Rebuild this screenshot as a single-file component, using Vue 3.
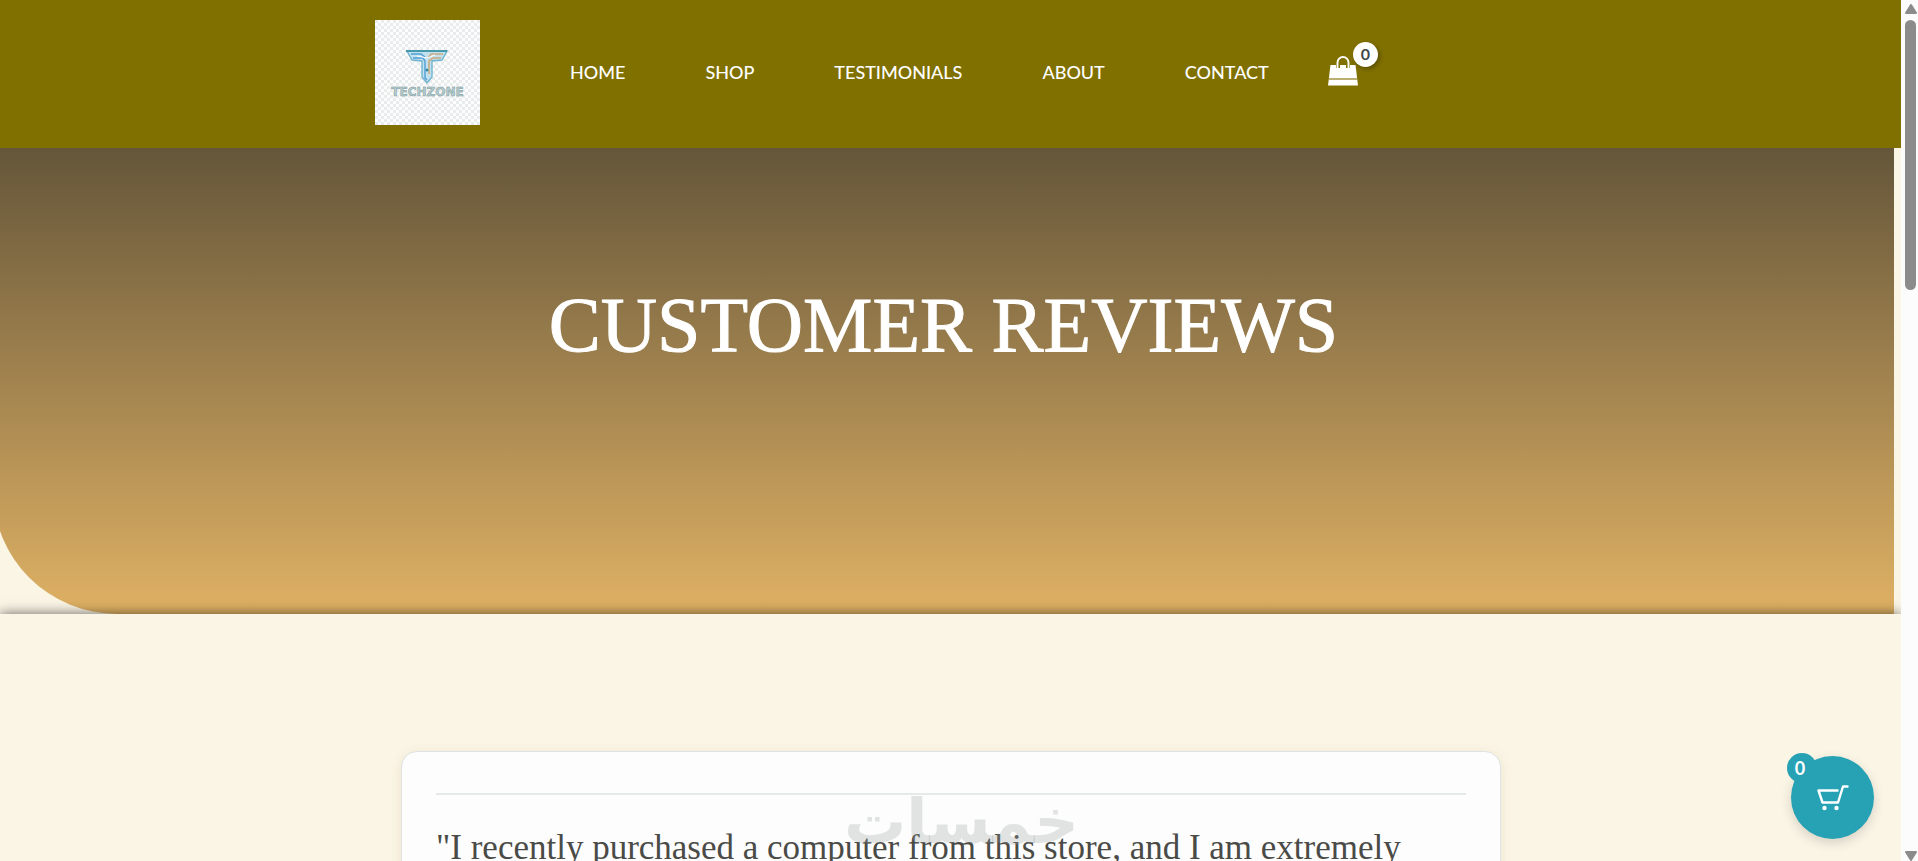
<script setup>
const links = ['Home', 'Shop', 'Testimonials', 'About', 'Contact']
const cartCount = 0
const review = '"I recently purchased a computer from this store, and I am extremely'
</script>

<template>
  <div class="window">
    <div class="page">
      <header class="site-header">
        <a class="logo" href="#" aria-label="TechZone">
          <svg viewBox="0 0 105 105" width="105" height="105" aria-hidden="true">
            <defs>
              <pattern id="checks" width="6" height="6" patternUnits="userSpaceOnUse">
                <rect width="6" height="6" fill="#fdfdfd" />
                <path d="M0 0h3v3H0zM3 3h3v3H3z" fill="#e9ecec" />
              </pattern>
            </defs>
            <rect width="105" height="105" fill="url(#checks)" />
            <path d="M32 31h40l-5 9-10 1v16l-5 6-5-6V41l-10-1z" fill="#c3e0ee" stroke="#6fb4d0" stroke-width="1.4" />
            <path d="M31 31h41" stroke="#2e8c9c" stroke-width="1.6" />
            <path d="M36 34h10l4 3M38 38h10l2 3v17l2 2" fill="none" stroke="#4f9fd6" stroke-width="1.4" />
            <path d="M68 34H56l-3 4M66 38h-8l-4 3v13" fill="none" stroke="#c9ab80" stroke-width="1.6" />
            <path d="M42 36l10 2 8-3" fill="none" stroke="#fff" stroke-width="1" />
            <circle cx="52" cy="50" r="1.5" fill="#2e8ca6" />
            <text x="52.5" y="76" text-anchor="middle" class="wordmark">TECHZONE</text>
          </svg>
        </a>
        <nav class="menu" aria-label="Main">
          <a v-for="link in links" :key="link" href="#">{{ link }}</a>
        </nav>
        <a class="bag" href="#" aria-label="View shopping bag">
          <svg viewBox="0 0 30 30" width="30" height="30" aria-hidden="true">
            <path d="M2.5 9h25L30 29.500H0z" fill="#fff" />
            <path d="M10 12V6a5 5 0 0 1 10 0v6" fill="none" stroke="#807000" stroke-width="4" />
            <path d="M9.500 12V6.500a5.500 5.500 0 0 1 11 0V12" fill="none" stroke="#fff" stroke-width="1.900" />
            <path d="M1 23h28" stroke="#b3a562" stroke-width="1.800" />
          </svg>
          <span class="bag-count">{{ cartCount }}</span>
        </a>
      </header>

      <section class="hero">
        <h1>Customer Reviews</h1>
      </section>

      <main class="reviews">
        <article class="card">
          <hr />
          <p>{{ review }}</p>
          <span class="watermark" lang="ar" dir="rtl">خمسات</span>
        </article>
      </main>

      <button class="cart" type="button" aria-label="Open cart">
        <svg viewBox="0 0 32 26" width="32" height="26" fill="none" stroke="#fff" stroke-width="2.400" stroke-linecap="round" stroke-linejoin="round" aria-hidden="true">
          <path d="M20.500 5.500H1.500L5.500 17.500H21L26 1.500h4.500" />
          <circle cx="7.500" cy="23" r="2.200" fill="#fff" stroke="none" />
          <circle cx="19.500" cy="23" r="2.200" fill="#fff" stroke="none" />
        </svg>
        <span class="cart-count">{{ cartCount }}</span>
      </button>
    </div>

    <div class="scrollbar" aria-hidden="true">
      <svg viewBox="0 0 12 10" width="12" height="10"><path d="M6 1l5 8H1z" fill="#8b8b8b" stroke="#8b8b8b" stroke-width="2" stroke-linejoin="round" /></svg>
      <div class="track"><div class="thumb"></div></div>
      <svg viewBox="0 0 12 10" width="12" height="10"><path d="M6 9l5-8H1z" fill="#8b8b8b" stroke="#8b8b8b" stroke-width="2" stroke-linejoin="round" /></svg>
    </div>
  </div>
</template>

<style>
body {
  margin: 0;
}
</style>

<style scoped>
.window {
  display: flex;
  height: 100vh;
  overflow: hidden;
  background: #fbf5e6;
  font-family: Lato, "Liberation Sans", sans-serif;
}

.page {
  position: relative;
  flex: 1;
  min-width: 0;
  overflow: hidden;
}

.site-header {
  display: flex;
  align-items: center;
  box-sizing: border-box;
  padding: 20px 24px 23px 375px;
  background: #807000;
}

.logo {
  display: flex;
}

.wordmark {
  font: bold 12px "DejaVu Sans", sans-serif;
  fill: #b4cdd0;
  stroke: #7f9a9c;
  stroke-width: 0.5px;
}

.menu {
  display: flex;
  gap: 80px;
  margin-left: 90px;
  padding-bottom: 2px;
}

.menu a {
  color: #fff;
  font-size: 18px;
  font-weight: 500;
  line-height: 24px;
  text-decoration: none;
  text-transform: uppercase;
}

.bag {
  position: relative;
  display: flex;
  margin-left: 59px;
  padding-bottom: 4px;
}

.bag-count {
  position: absolute;
  top: -14px;
  left: 25px;
  width: 25px;
  height: 25px;
  border-radius: 50%;
  background: #fff;
  box-shadow: 2px 2px 4px rgba(0, 0, 0, 0.3);
  color: #3f4748;
  font-size: 16px;
  font-weight: 700;
  line-height: 24px;
  text-align: center;
}

.hero {
  display: flex;
  justify-content: center;
  margin: 0 7px 0 -7px;
  padding: 132px 0 244px;
  border-bottom-left-radius: 124px;
  background: linear-gradient(#65563a, #dfb164);
}

.hero h1 {
  margin: 0;
  color: #fff;
  font-family: "Liberation Serif", serif;
  font-size: 78px;
  font-weight: 400;
  line-height: 90px;
  text-transform: uppercase;
  -webkit-text-stroke: 1px #fff;
}

.reviews {
  position: relative;
  padding: 137px 400px 0 401px;
  background: #fbf5e6;
  box-shadow: 0 0 12px rgba(0, 0, 0, 0.6);
}

.card {
  position: relative;
  padding: 41px 34px 80px;
  border: 1px solid #dfe3e4;
  border-radius: 16px;
  background: #fdfdfd;
  box-shadow: 0 2px 12px rgba(120, 110, 40, 0.12);
}

.card hr {
  height: 2px;
  margin: 0;
  border: 0;
  background: #e6e9e9;
}

.card p {
  margin: 31px 0 0;
  color: #4a4b47;
  font-family: "Liberation Serif", serif;
  font-size: 35px;
  line-height: 44px;
}

.watermark {
  position: absolute;
  top: 30px;
  left: 442px;
  color: rgba(150, 160, 160, 0.27);
  font-family: "DejaVu Sans", sans-serif;
  font-size: 62px;
  font-weight: 700;
  line-height: 80px;
}

.cart {
  position: absolute;
  right: 27px;
  bottom: 22px;
  display: grid;
  place-items: center;
  width: 83px;
  height: 83px;
  padding: 0;
  border: 0;
  border-radius: 50%;
  background: #27a2b4;
  box-shadow: 0 4px 12px rgba(0, 0, 0, 0.15);
  font-family: inherit;
}

.cart-count {
  position: absolute;
  top: -3px;
  left: -4px;
  box-sizing: border-box;
  width: 30px;
  height: 30px;
  padding-right: 4px;
  border-radius: 50%;
  background: #27a2b4;
  color: #fff;
  font-size: 18px;
  font-weight: 700;
  line-height: 30px;
  text-align: center;
}

.scrollbar {
  display: flex;
  flex-direction: column;
  align-items: center;
  box-sizing: border-box;
  width: 17px;
  padding: 4px 0 0 2px;
  background: #fcfcfc;
}

.track {
  flex: 1;
  padding-top: 6px;
}

.thumb {
  width: 11px;
  height: 270px;
  border-radius: 6px;
  background: #8b8b8b;
}
</style>
